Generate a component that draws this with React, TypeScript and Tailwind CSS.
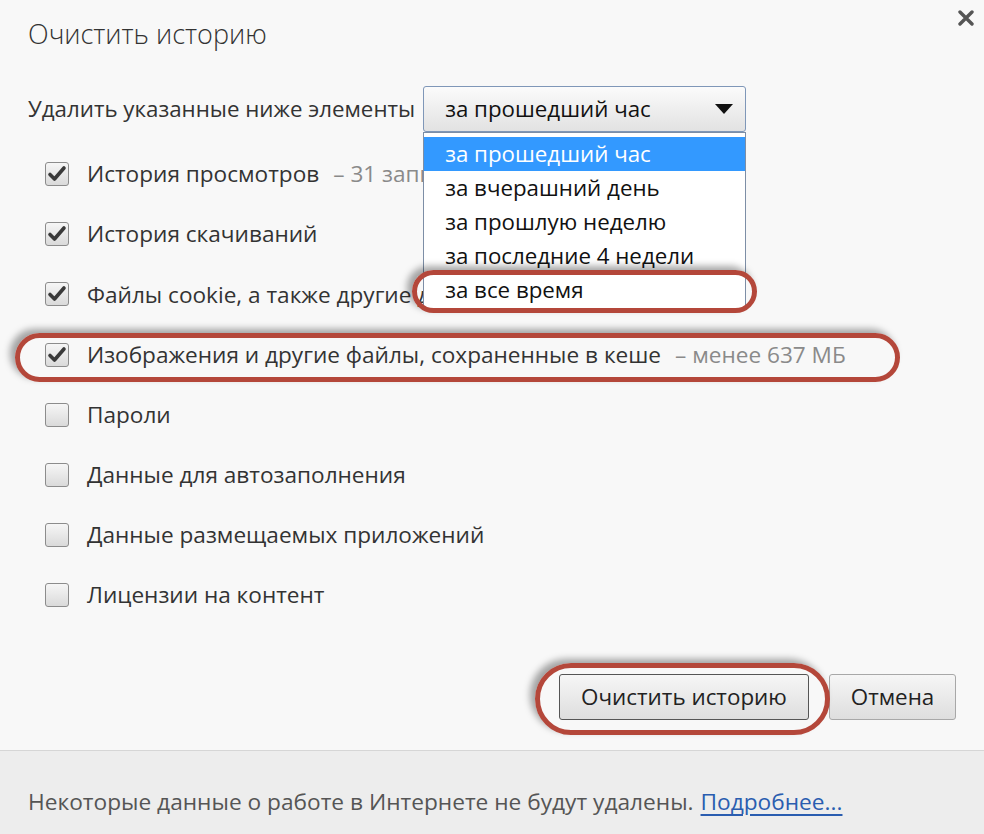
import React from 'react';

const rows = [
  { label: 'История просмотров', note: '–  31 запись', checked: true },
  { label: 'История скачиваний', checked: true },
  { label: 'Файлы cookie, а также другие данные сайтов и плагинов', checked: true },
  { label: 'Изображения и другие файлы, сохраненные в кеше', note: '–  менее 637 МБ', checked: true },
  { label: 'Пароли', checked: false },
  { label: 'Данные для автозаполнения', checked: false },
  { label: 'Данные размещаемых приложений', checked: false },
  { label: 'Лицензии на контент', checked: false },
];

const periods = ['за прошедший час', 'за вчерашний день', 'за прошлую неделю', 'за последние 4 недели', 'за все время'];

const Checkbox = ({ checked }: { checked: boolean }) => (
  <div className="w-[24px] h-[24px] shrink-0 rounded-[3px] border border-[#8c8c8c] bg-gradient-to-b from-[#f6f6f6] to-[#dadada] flex items-center justify-center">
    {checked && (
      <svg width="20" height="18" viewBox="0 0 20 18">
        <path d="M3 9.5 L7.5 14 L17 3" fill="none" stroke="#3a3a3a" strokeWidth="3.6" strokeLinecap="round" strokeLinejoin="round" />
      </svg>
    )}
  </div>
);

export default function App() {
  return (
    <div className="relative w-[984px] h-[834px] overflow-hidden bg-[#f8f8f8] flex flex-col text-[#333] font-['Open_Sans','Noto_Sans',sans-serif]">
      <div className="flex-1 px-[28px]">
        <h1 className="pt-[14px] text-[27px] leading-[40px] font-light text-[#333]">Очистить историю</h1>

        <div className="mt-[32px] flex items-center gap-[8px]">
          <span className="text-[22.3px] leading-[30px] text-[#333]">Удалить указанные ниже элементы</span>
          <div className="relative z-10">
            <div className="w-[323px] h-[46px] rounded-[3px] border border-[#7f97b8] bg-gradient-to-b from-[#fbfbfb] to-[#e2e2e2] flex items-center justify-between pl-[21px] pr-[12px]">
              <span className="text-[22.3px] text-[#111]">за прошедший час</span>
              <svg width="18" height="10" viewBox="0 0 18 10"><path d="M0 0 H18 L9 10 Z" fill="#111" /></svg>
            </div>
            <div className="absolute left-0 top-[46px] w-[323px] bg-white border border-[#7d8ea6] pt-[4px] pb-[1px]">
              {periods.map((p, i) => (
                <div
                  key={p}
                  className={`h-[34px] pl-[21px] flex items-center text-[22.3px] ${i === 0 ? 'bg-[#3399ff] text-white' : 'text-[#111]'}`}
                >
                  {p}
                </div>
              ))}
            </div>
          </div>
        </div>

        <div className="mt-[12px] pl-[17px] flex flex-col">
          {rows.map((r) => (
            <div key={r.label} className="h-[60.2px] flex items-center gap-[18px] whitespace-nowrap">
              <Checkbox checked={r.checked} />
              <span className="text-[22.6px] text-[#333]">
                {r.label}
                {r.note && <span className="ml-[14px] text-[#8a8a8a]">{r.note}</span>}
              </span>
            </div>
          ))}
        </div>

        <div className="mt-[48px] flex justify-end gap-[20px]">
          <button className="w-[250px] h-[46px] rounded-[3px] border border-[#555] bg-gradient-to-b from-[#f6f6f6] to-[#dedede] text-[22.4px] text-[#222]">
            Очистить историю
          </button>
          <button className="w-[127px] h-[46px] rounded-[3px] border border-[#a8a8a8] bg-gradient-to-b from-[#f6f6f6] to-[#dedede] text-[22.4px] text-[#222]">
            Отмена
          </button>
        </div>
      </div>

      <div className="h-[84px] border-t border-[#d6d6d6] bg-[#ededed] px-[28px] pt-[20px] flex items-center text-[22.7px] text-[#555]">
        <span>Некоторые данные о работе в Интернете не будут удалены.</span>
        <a className="ml-[7px] text-[#2a5db0] underline underline-offset-[4px]">Подробнее...</a>
      </div>

      <button className="absolute top-[8px] right-[8px] w-[20px] h-[20px] flex items-center justify-center">
        <svg width="16" height="16" viewBox="0 0 16 16">
          <path d="M2 2 L14 14 M14 2 L2 14" stroke="#555" strokeWidth="3.4" strokeLinecap="round" />
        </svg>
      </button>

      {/* annotation ellipses */}
      <div className="absolute left-[412px] top-[270px] w-[345px] h-[43px] rounded-full border-[5px] border-[#b4473a] shadow-[-5px_-4px_7px_rgba(0,0,0,0.35)] z-20" />
      <div className="absolute left-[15px] top-[333px] w-[885px] h-[49px] rounded-full border-[5px] border-[#b4473a] shadow-[-5px_-4px_7px_rgba(0,0,0,0.35)] z-20" />
      <div className="absolute left-[535px] top-[663px] w-[295px] h-[72px] rounded-full border-[5px] border-[#b4473a] shadow-[-5px_-4px_7px_rgba(0,0,0,0.35)] z-20" />
    </div>
  );
}
